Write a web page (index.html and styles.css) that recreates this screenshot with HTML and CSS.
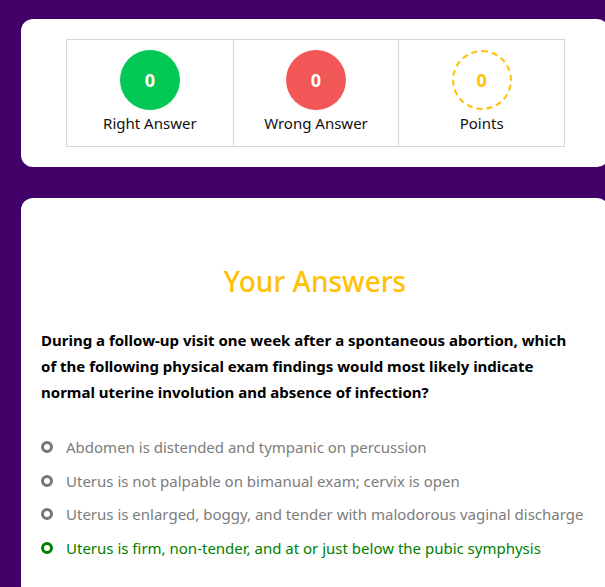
FILE: index.html
```
<!DOCTYPE html>
<html lang="en">
<head>
  <meta charset="UTF-8">
  <meta name="viewport" content="width=device-width, initial-scale=1.0">
  <title>Quiz Result</title>
  <link rel="stylesheet" href="styles.css">
</head>
<body>
  <div class="page">
    <div class="card score-card">
      <div class="stats">
        <div class="stat">
          <div class="badge badge-right">0</div>
          <p>Right Answer</p>
        </div>
        <div class="stat">
          <div class="badge badge-wrong">0</div>
          <p>Wrong Answer</p>
        </div>
        <div class="stat">
          <div class="badge badge-points">0</div>
          <p>Points</p>
        </div>
      </div>
    </div>

    <div class="card answers-card">
      <h2>Your Answers</h2>
      <p class="question">During a follow-up visit one week after a spontaneous abortion, which of the following physical exam findings would most likely indicate normal uterine involution and absence of infection?</p>
      <ul class="options">
        <li><span class="dot"></span>Abdomen is distended and tympanic on percussion</li>
        <li><span class="dot"></span>Uterus is not palpable on bimanual exam; cervix is open</li>
        <li><span class="dot"></span>Uterus is enlarged, boggy, and tender with malodorous vaginal discharge</li>
        <li class="correct"><span class="dot"></span>Uterus is firm, non-tender, and at or just below the pubic symphysis</li>
      </ul>
    </div>
  </div>
</body>
</html>
```
FILE: styles.css
```
body {
  font-family: "Segoe UI", "Noto Sans", sans-serif;
  background-color: #400068;
  margin: 0;
  overflow: hidden;
}
.page {
  width: 588px;
  padding: 19px 0 0 21px;
}
.card {
  background: #ffffff;
  border-radius: 12px;
}
.score-card {
  padding: 20px 44px 20px 45px;
  margin-bottom: 31px;
}
.stats {
  display: grid;
  grid-template-columns: repeat(3, 1fr);
  border: 1px solid #d5d5dd;
}
.stat {
  display: flex;
  flex-direction: column;
  align-items: center;
  padding-top: 10px;
  height: 96px;
}
.stat + .stat {
  border-left: 1px solid #d5d5dd;
}
.stat p {
  margin: 2px 0 0;
  font-size: 15px;
  line-height: 22px;
  color: #111111;
}
.badge {
  width: 60px;
  height: 60px;
  border-radius: 50%;
  display: flex;
  align-items: center;
  justify-content: center;
  font-size: 18px;
  font-weight: bold;
  color: #ffffff;
  box-sizing: border-box;
}
.badge-right {
  background-color: #03c855;
}
.badge-wrong {
  background-color: #f25757;
}
.badge-points {
  border: 2px dashed #ffc107;
  color: #ffc107;
}
.answers-card {
  padding: 64px 20px 20px;
  height: 330px;
}
.answers-card h2 {
  text-align: center;
  color: #ffc107;
  font-size: 28px;
  font-weight: 500;
  margin: 0 0 27px;
}
.question {
  margin: 0 0 25px;
  font-size: 15px;
  font-weight: bold;
  line-height: 26px;
  color: #000000;
  width: 530px;
}
.options {
  list-style: none;
  margin: 0;
  padding: 0;
}
.options li {
  display: flex;
  align-items: center;
  height: 33.7px;
  font-size: 15px;
  color: #7c7c7c;
  white-space: nowrap;
}
.dot {
  width: 12px;
  height: 12px;
  border: 3px solid #777777;
  border-radius: 50%;
  box-sizing: border-box;
  margin: 0 13px 0 0;
  flex-shrink: 0;
}
.options .correct {
  color: #008000;
}
.correct .dot {
  border-color: #008000;
}
```
